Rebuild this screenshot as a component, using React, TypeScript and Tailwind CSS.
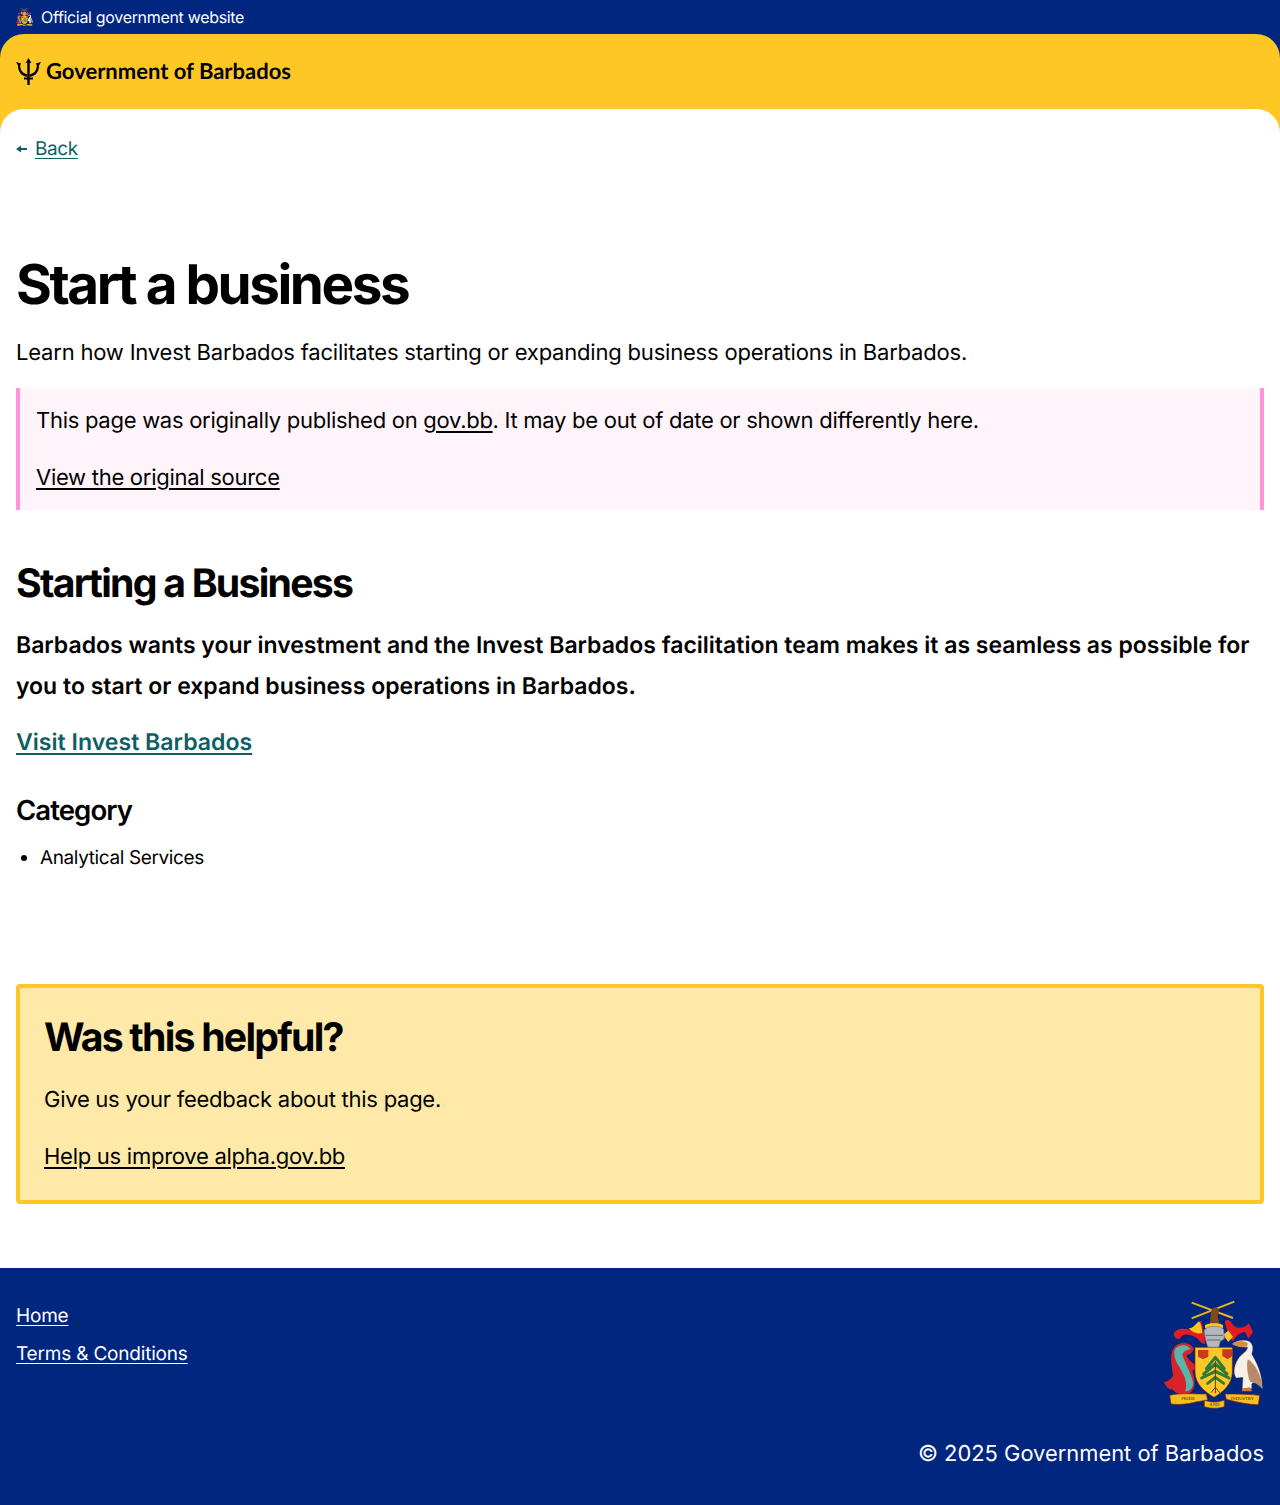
const link = "underline underline-offset-[3px]";
function Trident(){return(<svg width="25" height="27" viewBox="0 0 25 27" fill="#000"><path d="M12.5 0L15.5 5.2L13.7 4.5V27H11.3V4.5L9.5 5.2Z"/><path d="M0 4L5.2 5.4L4.2 7C4.2 12 6.2 15 11.3 16.4V18.8C5 18 1.8 13 2 7.4Z"/><path d="M25 4L19.8 5.4L20.8 7C20.8 12 18.8 15 13.7 16.4V18.8C20 18 23.2 13 23 7.4Z"/><path d="M8 19.5H17V21.5H8Z"/></svg>)}
function Crest({w}:{w:number}){return(<svg width={w} height={w*1.087} viewBox="45 30 300 326">
<path d="M128 38L252 84M256 35L128 85" stroke="#e8b51f" strokeWidth="6"/>
<path d="M182 105L186 66C186 54 204 48 208 56C212 64 208 70 206 78L212 105Z" fill="#7d4a22"/>
<path d="M168 106C180 98 212 98 222 106L222 114H168Z" fill="#ffc726"/>
<path d="M75 128C90 108 118 118 132 122C138 106 150 92 158 92C156 104 166 112 162 124C170 130 166 150 168 162C152 160 148 142 136 140C118 132 100 128 92 148C80 146 72 138 75 128Z" fill="#e31b23"/>
<path d="M118 114C130 118 136 106 150 94C158 104 158 116 160 130C146 132 130 128 118 114Z" fill="#ffc726"/>
<path d="M228 92C246 84 248 106 262 112C278 116 292 110 300 100L312 126L298 146L288 126C272 128 262 136 252 154C246 146 240 140 232 132C240 118 226 108 228 92Z" fill="#e31b23"/>
<path d="M222 134L238 122L252 140L238 156Z" fill="#ffc726"/>
<path d="M165 122C172 106 212 104 224 118L226 146L214 154L208 176H178L170 150Z" fill="#b4b8bd" stroke="#70757c" strokeWidth="2"/>
<path d="M170 136H222M174 150H214" stroke="#666" strokeWidth="3"/>
<path d="M72 178C84 152 128 154 134 178C126 196 118 192 112 198C120 212 132 218 146 232L130 242C138 268 144 296 118 312C96 318 78 308 68 296C62 304 52 290 44 276C56 276 64 268 72 258C70 232 60 204 72 178Z" fill="#d9232a"/>
<path d="M78 178C90 160 120 164 124 178C112 180 102 184 100 196C110 222 126 252 132 276C134 292 124 304 108 304C118 284 106 256 96 240C86 222 70 200 78 178Z" fill="#58b7ac"/>
<path d="M138 172H250V246C250 282 222 306 195 322C168 306 138 282 138 246Z" fill="#ffc726" stroke="#8e1b1b" strokeWidth="2"/>
<path d="M147 180H178V200L162 208L147 200Z" fill="#c8391e"/><path d="M220 178H250V198L236 208L220 198Z" fill="#c8391e"/>
<path d="M199 202L172 236M199 202L226 236M199 222L164 252M199 222L234 252M199 244L158 264M199 244L240 264M199 262L176 280M199 262L224 280" stroke="#2f7a36" strokeWidth="9" strokeLinecap="round" fill="none"/>
<path d="M199 212V292M199 292L186 308M199 292L212 308M199 292V310" stroke="#5a3a1a" strokeWidth="3" fill="none"/>
<path d="M250 162C264 150 286 148 300 154C312 162 314 176 308 192C322 216 340 250 340 296C326 280 316 272 308 282L308 296H280L282 262L262 264C250 250 256 220 272 200C284 190 296 180 296 172C282 170 264 172 250 162Z" fill="#f6f1e6" stroke="#6b5a3f" strokeWidth="1"/>
<path d="M250 160C266 152 286 152 296 160C296 170 292 172 284 172C270 172 258 168 250 160Z" fill="#d98a3a"/>
<path d="M296 208C318 220 338 256 340 296C328 284 316 276 304 276C296 256 292 232 296 208Z" fill="#b9896a"/>
<path d="M280 296L302 292L310 304H278Z" fill="#d9772b"/>
<path d="M62 316C94 308 136 312 172 312L176 330L140 336C114 344 84 344 66 342Z" fill="#f2c025" stroke="#8e1b1b" strokeWidth="2"/>
<path d="M166 330C186 338 206 338 226 330L226 350C206 356 186 356 166 350Z" fill="#f2c025" stroke="#8e1b1b" strokeWidth="2"/>
<path d="M228 312C260 312 298 312 332 316L328 344C300 344 270 338 232 328Z" fill="#f2c025" stroke="#8e1b1b" strokeWidth="2"/>
<text x="117" y="330" textAnchor="middle" fontSize="14" fill="#4a2b10" fontFamily="'Liberation Serif',serif">PRIDE</text>
<text x="196" y="348" textAnchor="middle" fontSize="14" fill="#4a2b10" fontFamily="'Liberation Serif',serif">AND</text>
<text x="280" y="331" textAnchor="middle" fontSize="14" fill="#4a2b10" fontFamily="'Liberation Serif',serif">INDUSTRY</text>
</svg>)}
export default function App(){return(
<div className="min-h-[1505px] bg-[#00267f] font-['Inter','Liberation_Sans',sans-serif] text-black [text-rendering:geometricPrecision]">
 <div className="h-[34px] px-4 flex items-center gap-[8px] text-white text-[16px] tracking-[-0.02em]"><Crest w={17}/><span>Official government website</span></div>
 <div className="bg-[#ffc726] rounded-t-[24px] h-[99px] px-4 pt-[24px] flex items-start gap-[5px]"><Trident/><span className="font-['Lato',sans-serif] text-[22px] font-bold leading-[26px]">Government of Barbados</span></div>
 <main className="-mt-6 relative bg-white rounded-t-[24px] px-4 pb-16">
  <div className="pt-[26px] flex items-center gap-[8px] text-[#0e5f64] text-[19px] tracking-[-0.02em] leading-[27px]"><svg width="11" height="8" viewBox="0 0 11 8" fill="#0e5f64"><path d="M0 4L5 .5V3H11V5H5V7.5Z"/></svg><a className={link}>Back</a></div>
  <h1 className="mt-[87px] text-[54.8px] leading-[72px] font-bold tracking-[-0.045em]">Start a business</h1>
  <p className="mt-[16px] text-[22px] tracking-[-0.009em] leading-[32px]">Learn how Invest Barbados facilitates starting or expanding business operations in Barbados.</p>
  <div className="mt-[19px] h-[122px] bg-[#fff4fa] border-x-4 border-[#ff94da] px-4 pt-[17px] text-[22px] tracking-[-0.0125em] leading-[32px]">
   <p>This page was originally published on <a className={link}>gov.bb</a>. It may be out of date or shown differently here.</p>
   <p className="mt-[25px]"><a className={link}>View the original source</a></p>
  </div>
  <h2 className="mt-[50px] text-[39.2px] leading-[48px] font-bold tracking-[-0.045em]">Starting a Business</h2>
  <p className="mt-[17px] text-[23px] leading-[41px] font-semibold">Barbados wants your investment and the Invest Barbados facilitation team makes it as seamless as possible for you to start or expand business operations in Barbados.</p>
  <p className="mt-[19px] text-[23.1px] leading-[32px] font-semibold text-[#0e5f64]"><a className={link}>Visit Invest Barbados</a></p>
  <h3 className="mt-[34px] text-[27.6px] leading-[36px] font-semibold tracking-[-0.035em]">Category</h3>
  <ul className="mt-[16px] list-disc pl-6 text-[19px] tracking-[-0.02em] leading-[28px]"><li>Analytical Services</li></ul>
  <section className="mt-[112px] h-[220px] bg-[#fee9a8] border-4 border-[#ffc726] rounded-[4px] px-6 pt-[26px]">
   <h2 className="text-[39.2px] leading-[48px] font-bold tracking-[-0.045em]">Was this helpful?</h2>
   <p className="mt-[22px] text-[22px] tracking-[-0.012em] leading-[32px]">Give us your feedback about this page.</p>
   <p className="mt-[25px] text-[22px] tracking-[-0.012em] leading-[32px]"><a className={link}>Help us improve alpha.gov.bb</a></p>
  </section>
 </main>
 <footer className="h-[237px] px-4 pt-[34px] flex justify-between text-white">
  <div className="flex flex-col items-start gap-[10px] text-[19px] tracking-[-0.01em] leading-[28px]"><a className={link}>Home</a><a className={link}>Terms &amp; Conditions</a></div>
  <div className="flex flex-col items-end -mt-[2px]"><Crest w={100}/><p className="mt-[29px] text-[21.9px] leading-[32px]">© 2025 Government of Barbados</p></div>
 </footer>
</div>)}
